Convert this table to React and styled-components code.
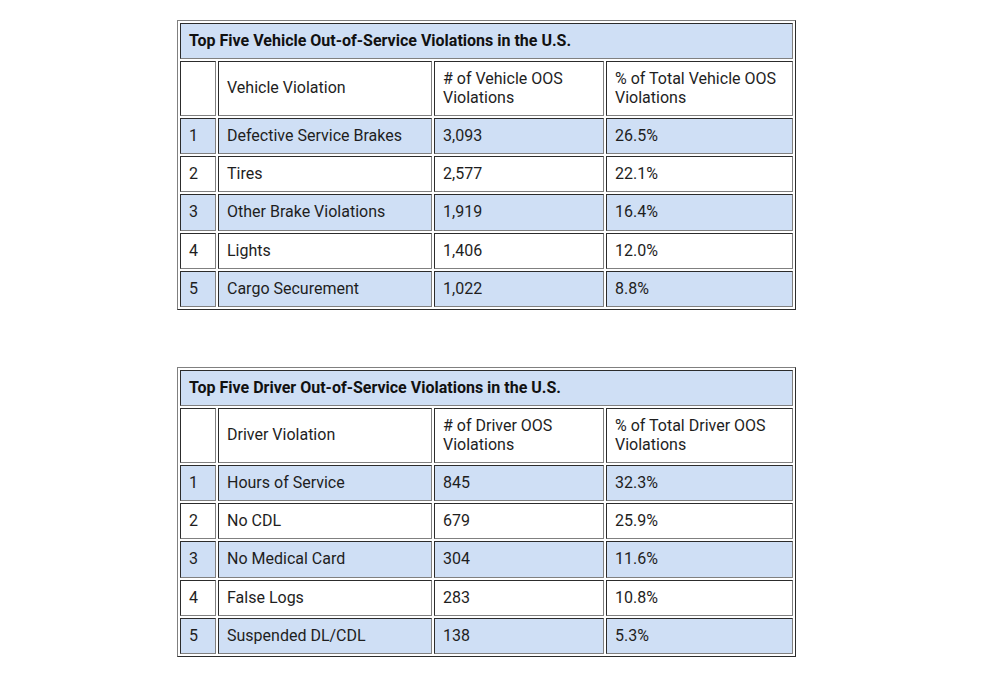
import React from 'react';
import styled, { createGlobalStyle } from 'styled-components';

const GlobalStyle = createGlobalStyle`
  html, body {
    margin: 0;
    padding: 0;
    background: #ffffff;
  }
  body {
    font-family: Roboto, "Noto Sans", "Liberation Sans", sans-serif;
    color: #222222;
  }
`;

const Page = styled.div`
  width: 985px;
  height: 682px;
  overflow: hidden;
  padding: 20px 0 0 177px;
  box-sizing: border-box;
  display: flex;
  flex-direction: column;
  gap: 57px;
`;

const Table = styled.table`
  border: 1px outset #808080;
  border-collapse: separate;
  border-spacing: 2px;
  table-layout: fixed;
  width: 619px;
  font-size: 16px;
  line-height: 18.25px;
`;

const Col = styled.col`
  width: ${(p) => p.$w}px;
`;

const Cell = styled.td`
  border: 1px inset #808080;
  padding: 8px;
  vertical-align: middle;
  background: ${(p) => (p.$shade ? '#cfdff5' : '#ffffff')};
  color: #1e1e1e;
`;

const TitleCell = styled(Cell)`
  font-weight: 700;
  background: #cfdff5;
  color: #111111;
`;

const HeadCell = styled(Cell)`
  background: #ffffff;
`;

const widths = [36, 214, 170, 187];

const vehicle = {
  title: 'Top Five Vehicle Out-of-Service Violations in the U.S.',
  head: ['Vehicle Violation', '# of Vehicle OOS Violations', '% of Total Vehicle OOS Violations'],
  rows: [
    ['Defective Service Brakes', '3,093', '26.5%'],
    ['Tires', '2,577', '22.1%'],
    ['Other Brake Violations', '1,919', '16.4%'],
    ['Lights', '1,406', '12.0%'],
    ['Cargo Securement', '1,022', '8.8%'],
  ],
};

const driver = {
  title: 'Top Five Driver Out-of-Service Violations in the U.S.',
  head: ['Driver Violation', '# of Driver OOS Violations', '% of Total Driver OOS Violations'],
  rows: [
    ['Hours of Service', '845', '32.3%'],
    ['No CDL', '679', '25.9%'],
    ['No Medical Card', '304', '11.6%'],
    ['False Logs', '283', '10.8%'],
    ['Suspended DL/CDL', '138', '5.3%'],
  ],
};

const ViolationTable = ({ data }) => (
  <Table>
    <colgroup>
      {widths.map((w, i) => (
        <Col key={i} $w={w} />
      ))}
    </colgroup>
    <tbody>
      <tr>
        <TitleCell colSpan={4}>{data.title}</TitleCell>
      </tr>
      <tr>
        <HeadCell></HeadCell>
        {data.head.map((h) => (
          <HeadCell key={h}>{h}</HeadCell>
        ))}
      </tr>
      {data.rows.map((r, i) => (
        <tr key={r[0]}>
          <Cell $shade={i % 2 === 0}>{i + 1}</Cell>
          {r.map((c) => (
            <Cell key={c} $shade={i % 2 === 0}>{c}</Cell>
          ))}
        </tr>
      ))}
    </tbody>
  </Table>
);

export default function App() {
  return (
    <>
      <GlobalStyle />
      <Page>
        <ViolationTable data={vehicle} />
        <ViolationTable data={driver} />
      </Page>
    </>
  );
}
